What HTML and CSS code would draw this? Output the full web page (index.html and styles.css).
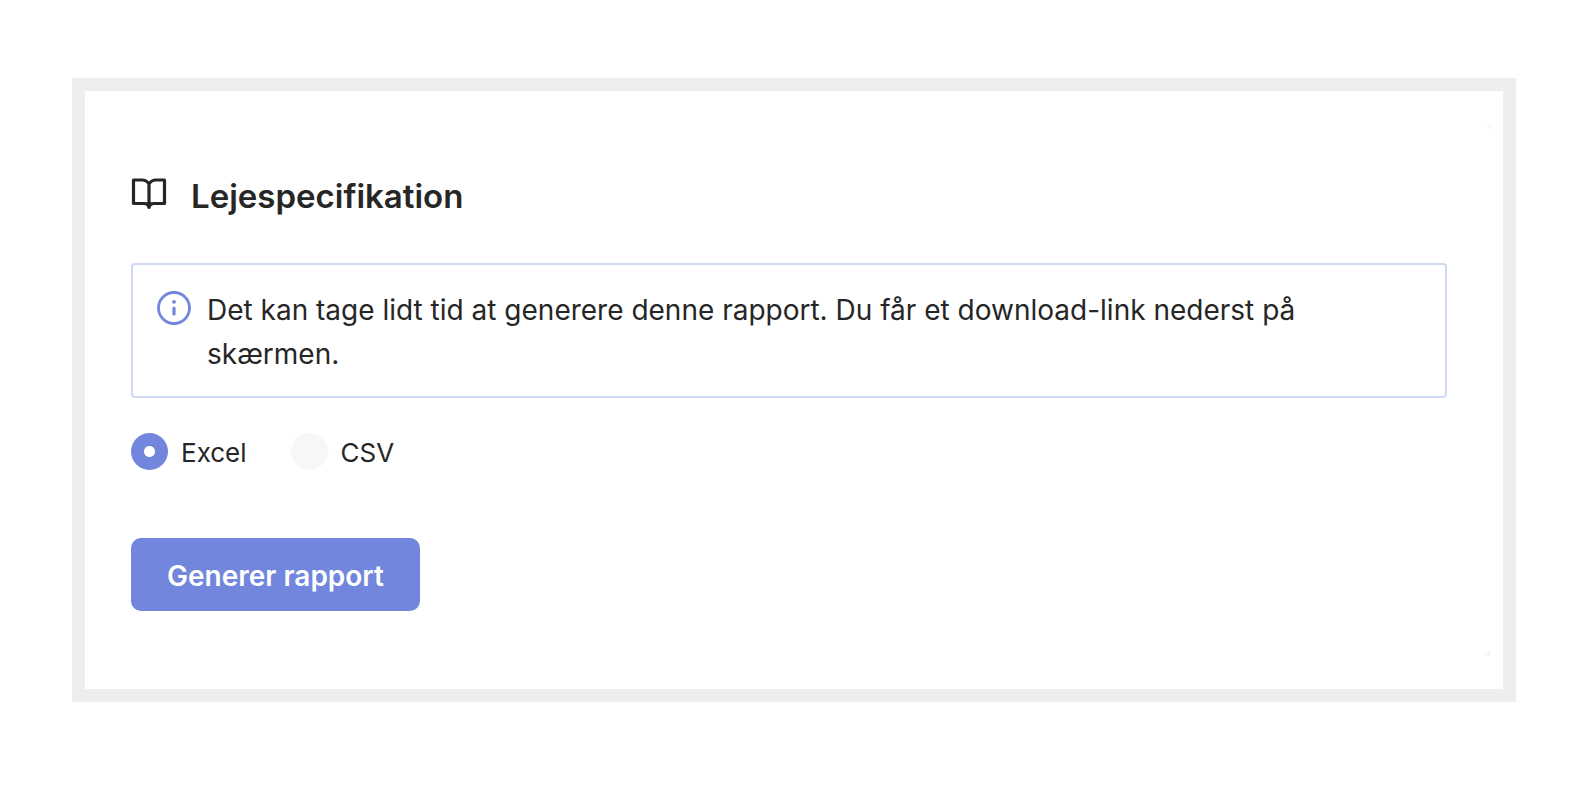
FILE: index.html
```html
<!DOCTYPE html>
<html lang="da">
<head>
    <meta charset="UTF-8">
    <meta name="viewport" content="width=device-width, initial-scale=1.0">
    <title>Lejespecifikation</title>
    <link rel="stylesheet" href="styles.css">
</head>
<body>
    <main class="frame">
        <form class="report">
            <div class="title">
                <svg class="bookIcon" viewBox="0 0 36 36" fill="none" stroke="currentColor" stroke-width="3.200" stroke-linejoin="round" stroke-linecap="round" aria-hidden="true">
                    <path d="M18 6C16.500 3.500 14 2 11 2H2.500V25.500H13.500C16 25.500 17.500 26.500 18 29.500C18.500 26.500 20 25.500 22.500 25.500H33.500V2H25C22 2 19.500 3.500 18 6V29.500"/>
                </svg>
                <h1>Lejespecifikation</h1>
            </div>
            <div class="notice">
                <svg class="infoIcon" viewBox="0 0 34 34" aria-hidden="true">
                    <circle cx="17" cy="17" r="15.500" fill="none" stroke="currentColor" stroke-width="2.800"/>
                    <circle cx="17" cy="10.800" r="1.900" fill="currentColor"/>
                    <path d="M17 17V23" stroke="currentColor" stroke-width="3.200" stroke-linecap="round"/>
                </svg>
                <p>Det kan tage lidt tid at generere denne rapport. Du får et download-link nederst på skærmen.</p>
            </div>
            <div class="formats">
                <div class="option">
                    <input type="radio" name="format" id="excel" value="excel" checked>
                    <label for="excel">Excel</label>
                </div>
                <div class="option">
                    <input type="radio" name="format" id="csv" value="csv">
                    <label for="csv">CSV</label>
                </div>
            </div>
            <button type="button" class="generate">Generer rapport</button>
        </form>
    </main>
</body>
</html>
```

FILE: styles.css
```css
* {
    margin: 0;
    padding: 0;
    box-sizing: border-box;
}

body {
    background: white;
    color: #262626;
    font-family: Inter, "Liberation Sans", sans-serif;
    padding: 78px 70px 92px 72px;
}

.frame {
    border: 13px solid #eeeeee;
    padding: 35px 13px 34px 0px;
}

/* faint rounded corners on the right side of the sheet */
.report {
    background:
        radial-gradient(circle at 0 100%, transparent 4px, #f4f4f4 5px) top right / 5px 5px no-repeat,
        radial-gradient(circle at 0 0, transparent 4px, #eeeeee 5px) bottom right / 5px 5px no-repeat;
    padding: 45px 43px 44px 46px;
}

.title {
    display: flex;
    align-items: center;
    gap: 24px;
    height: 50px;
    margin-bottom: 42px;
}

.title h1 {
    font-size: 33px;
    font-weight: 600;
    line-height: 50px;
}

.bookIcon {
    width: 36px;
    height: 36px;
}

.notice {
    display: flex;
    align-items: flex-start;
    gap: 16px;
    border: 2px solid #d0d8f7;
    border-radius: 4px;
    padding: 23px 24px 20px 24px;
}

.notice p {
    flex: 1;
    font-size: 28px;
    line-height: 44px;
}

.infoIcon {
    flex: none;
    width: 34px;
    height: 34px;
    margin-top: 3px;
    color: #7186dc;
}

.formats {
    display: flex;
    gap: 44px;
    margin: 35px 0px 68px 0px;
}

.option {
    display: flex;
    align-items: center;
    gap: 13px;
}

.option label {
    font-size: 26px;
    line-height: 35px;
    padding-top: 2px;
}

.option input {
    appearance: none;
    width: 37px;
    height: 37px;
    border-radius: 50%;
    background: #f8f7f6;
    cursor: pointer;
}

.option input:checked {
    background: radial-gradient(circle, white 5px, #7186dc 6px);
}

.generate {
    height: 73px;
    padding: 2px 36px 0px 36px;
    border: none;
    border-radius: 10px;
    background: #7186dc;
    color: white;
    font-family: inherit;
    font-size: 28px;
    font-weight: 600;
    cursor: pointer;
}
```
